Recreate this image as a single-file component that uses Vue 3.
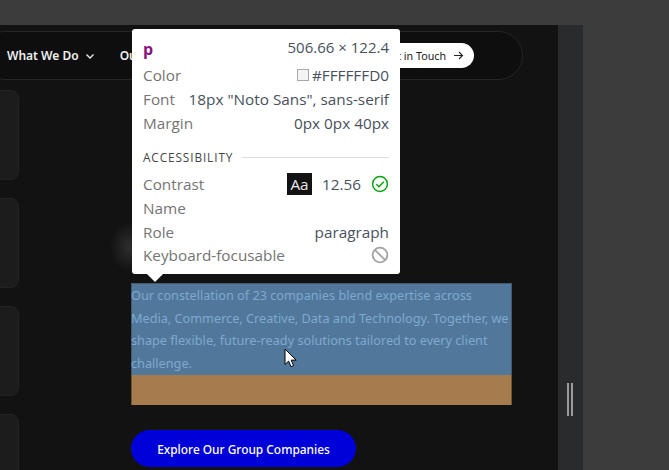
<script setup>
const cards = [0, 1, 2, 3]
const rows = [
  { label: 'Color', value: '#FFFFFFD0', swatch: true },
  { label: 'Font', value: '18px "Noto Sans", sans-serif' },
  { label: 'Margin', value: '0px 0px 40px' }
]
</script>

<template>
  <div class="shell">
    <div class="viewport">
      <div class="page">
        <nav class="nav">
          <span class="nav-link">What We Do
            <svg class="chev" width="10" height="10" viewBox="0 0 10 10"><path d="M1.5 3.5 5 7l3.5-3.5" fill="none" stroke="#e8e8e8" stroke-width="1.4"/></svg>
          </span>
          <span class="nav-link second">Our Work</span>
          <span class="cta">Get in Touch
            <svg width="11" height="11" viewBox="0 0 11 11"><path d="M1 5.5h8.5M6 2l3.5 3.5L6 9" fill="none" stroke="#222" stroke-width="1.1"/></svg>
          </span>
        </nav>
        <div class="body">
          <aside class="cards">
            <div v-for="c in cards" :key="c" class="card"></div>
          </aside>
          <main class="main">
            <div class="highlight">
              <p class="para">Our constellation of 23 companies blend expertise across<br>Media, Commerce, Creative, Data and Technology. Together, we<br>shape flexible, future-ready solutions tailored to every client<br>challenge.</p>
              <div class="margin-box"></div>
            </div>
            <button class="explore">Explore Our Group Companies</button>
          </main>
        </div>
      </div>
      <div class="scrollbar"></div>
    </div>
    <div class="grip"><i></i><i></i></div>
    <div class="glow"></div>

    <section class="tip">
      <div class="tip-head"><b class="tag">p</b><span class="val dims">506.66 × 122.4</span></div>
      <div v-for="r in rows" :key="r.label" class="row">
        <span class="lab">{{ r.label }}</span>
        <span class="val"><i v-if="r.swatch" class="swatch"></i>{{ r.value }}</span>
      </div>
      <div class="acc"><span>ACCESSIBILITY</span><i></i></div>
      <div class="row">
        <span class="lab">Contrast</span>
        <span class="val contrast">
          <span class="aa">Aa</span><span class="ratio">12.56</span>
          <svg width="18" height="18" viewBox="0 0 18 18"><circle cx="9" cy="9" r="7.4" fill="none" stroke="#0aa30a" stroke-width="1.5"/><path d="M5.3 9.2 8 11.8l4.8-5" fill="none" stroke="#0aa30a" stroke-width="1.5"/></svg>
        </span>
      </div>
      <div class="row"><span class="lab">Name</span></div>
      <div class="row"><span class="lab">Role</span><span class="val">paragraph</span></div>
      <div class="row last">
        <span class="lab">Keyboard-focusable</span>
        <svg width="18" height="18" viewBox="0 0 18 18"><circle cx="9" cy="9" r="7.4" fill="none" stroke="#a3a3a3" stroke-width="1.8"/><path d="M3.8 3.8l10.4 10.4" stroke="#a3a3a3" stroke-width="1.8"/></svg>
      </div>
      <span class="arrow"></span>
    </section>

    <svg class="cursor" width="14" height="21" viewBox="0 0 14 21"><path d="M1 1v15.5l3.6-3.4 2.4 5.6 2.6-1.1-2.4-5.5h5z" fill="#fff" stroke="#000" stroke-width="1"/></svg>
  </div>
</template>

<style>
html, body { margin: 0; background: #3c3c3c; overflow: hidden; }
</style>

<style scoped>
.shell {
  position: relative;
  width: 669px;
  height: 470px;
  padding-top: 25px;
  box-sizing: border-box;
  background: #3c3c3c;
  overflow: hidden;
  font-family: "Noto Sans", sans-serif;
}
.viewport { display: flex; width: 583px; height: 445px; }
.page { width: 558px; background: #121212; overflow: hidden; }
.scrollbar { width: 25px; background: #2a2b2d; }
.nav {
  display: flex;
  align-items: center;
  box-sizing: border-box;
  width: 543px;
  height: 49px;
  margin: 6px 0 0 -20px;
  padding-left: 26px;
  border: 1px solid #262626;
  border-radius: 25px;
  background: #0e0e0e;
  font-size: 12px;
  font-weight: 600;
  color: #f0f0f0;
}
.nav-link { display: flex; align-items: center; gap: 6px; white-space: nowrap; }
.second { margin-left: 25px; }
.cta {
  display: flex;
  align-items: center;
  gap: 7px;
  margin-left: auto;
  margin-right: 48px;
  height: 25px;
  padding: 0 10px 0 14px;
  border-radius: 13px;
  background: #fff;
  color: #222;
  font-size: 10.7px;
  font-weight: 400;
  white-space: nowrap;
}
.body { display: flex; margin-top: 10px; }
.cards { display: flex; flex-direction: column; gap: 18px; width: 19px; flex: none; }
.card {
  flex: none;
  box-sizing: border-box;
  height: 90px;
  margin-left: -12px;
  width: 31px;
  background: #1c1c1c;
  border: 1px solid #232323;
  border-radius: 8px;
}
.main { margin-left: 112px; padding-top: 193px; }
.highlight { width: 381px; }
.para {
  margin: 0;
  height: 92px;
  box-sizing: border-box;
  background: #51789a;
  color: #7ea9d0;
  font-size: 12.7px;
  line-height: 22.7px;
  white-space: nowrap;
  border-top: 1px solid #44596c;
  box-shadow: inset 1px 0 #44596c, inset -1px 0 #44596c;
}
.margin-box { height: 30px; background: #a67c4e; box-shadow: inset 1px 0 #6f5434, inset -1px 0 #6f5434; }
.explore {
  display: block;
  width: 225px;
  height: 37px;
  margin-top: 25px;
  border: 0;
  border-radius: 19px;
  background: #0000d8;
  color: #fff;
  font: 500 11.9px "Noto Sans", sans-serif;
}
.grip { position: absolute; left: 567px; top: 383px; display: flex; gap: 2px; }
.grip i { display: block; width: 2px; height: 33px; background: #9a9a9a; }
.glow {
  position: absolute;
  left: 110px;
  top: 222px;
  width: 40px;
  height: 50px;
  background: radial-gradient(closest-side, #2e2e2e, rgba(46,46,46,0));
}
.tip {
  position: absolute;
  left: 132px;
  top: 29px;
  box-sizing: border-box;
  width: 268px;
  height: 245px;
  padding: 6px 11px 0;
  background: #fff;
  border-radius: 3px;
  font-family: "Open Sans", sans-serif;
  font-size: 15.3px;
  line-height: 24px;
  color: #747474;
}
.tip-head, .row { display: flex; justify-content: space-between; align-items: center; height: 24px; white-space: nowrap; }
.tip-head { margin-bottom: 4px; }
.last { margin-top: -1px; }
.tag { color: #881280; font-weight: 700; font-size: 16px; line-height: 18px; margin-top: 4px; }
.val { color: #48515c; display: flex; align-items: center; }
.dims { font-size: 15px; }
.swatch {
  display: block;
  box-sizing: border-box;
  width: 12px;
  height: 12px;
  margin-right: 3px;
  background: #f4f4f4;
  border: 1px solid #a8a8a8;
}
.acc {
  display: flex;
  align-items: center;
  gap: 9px;
  margin-top: 10px;
  margin-bottom: 3px;
  height: 24px;
  font-size: 11.8px;
  font-weight: 500;
  letter-spacing: .9px;
  color: #444;
}
.acc i { flex: 1; height: 1px; background: #ddd; }
.contrast { gap: 0; }
.aa {
  width: 25px;
  height: 22px;
  background: #121212;
  color: #e8e8e8;
  text-align: center;
  line-height: 23px;
  font-size: 15.3px;
  margin-right: 10px;
}
.ratio { margin-right: 10px; }
.arrow {
  position: absolute;
  left: 15px;
  bottom: -8px;
  width: 0;
  height: 0;
  border: 8px solid transparent;
  border-bottom: 0;
  border-top-color: #fff;
}
.cursor { position: absolute; left: 284px; top: 348px; }
</style>
